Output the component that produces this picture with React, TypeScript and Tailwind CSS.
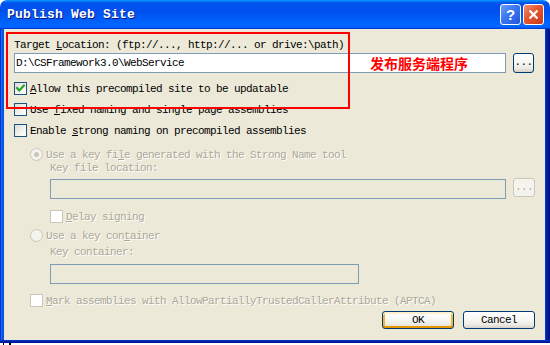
import React from "react";

const mono = "font-['Liberation_Mono',monospace] text-[11px] tracking-[-0.6px] leading-[13px] whitespace-pre";
const dis = "text-[#ACA899] [text-shadow:1px_1px_0_#ffffff]";
const xpBtn =
  "border border-[#003C74] rounded-[3px] bg-[linear-gradient(180deg,#ffffff_0%,#f7f7f4_45%,#eceae3_80%,#d6d0c5_100%)]";

function U({ children }: { children: React.ReactNode }) {
  return <span className="underline underline-offset-[1px] decoration-1">{children}</span>;
}

function Check({ checked = false, disabled = false }: { checked?: boolean; disabled?: boolean }) {
  return (
    <div
      className={
        "w-[13px] h-[13px] shrink-0 flex items-center justify-center border " +
        (disabled
          ? "border-[#CAC8BB] bg-white"
          : "border-[#1C5180] bg-[linear-gradient(135deg,#dcdcd7_0%,#f0f0ec_50%,#ffffff_100%)]")
      }
    >
      {checked && (
        <svg width="11" height="11" viewBox="0 0 11 11">
          <path d="M2 5 L4.3 7.5 L9 2.5" stroke="#21A121" strokeWidth="2" fill="none" strokeLinecap="square" />
        </svg>
      )}
    </div>
  );
}

function Radio({ checked = false }: { checked?: boolean }) {
  return (
    <div className="w-[13px] h-[13px] shrink-0 rounded-full border border-[#CAC8BB] bg-[#F4F3EE] flex items-center justify-center">
      {checked && <div className="w-[5px] h-[5px] rounded-full bg-[#CAC8BB]" />}
    </div>
  );
}

function Row({
  box,
  children,
  className = "",
}: {
  box: React.ReactNode;
  children: React.ReactNode;
  className?: string;
}) {
  return (
    <div className={"flex items-start h-[13px] gap-[3px] " + className}>
      {box}
      <div className={mono + " mt-px"}>{children}</div>
    </div>
  );
}

export default function App() {
  return (
    <div className="relative w-[550px] h-[345px] bg-white overflow-hidden">
      <div className="flex flex-col h-[343px] rounded-t-[7px] overflow-hidden">
        {/* Title bar */}
        <div className="h-[29px] shrink-0 flex items-center pl-[7px] pr-[6px] bg-[linear-gradient(180deg,#0997ff_0%,#0053ee_10%,#0050ee_40%,#0066ff_86%,#0066ff_92%,#005bff_95%,#003dd7_97%,#003dd7_100%)]">
          <div className="flex-1 pt-[1px] font-['Liberation_Mono',monospace] font-bold text-[13px] tracking-[0.2px] leading-[16px] text-white [text-shadow:1px_1px_0_#0a1883]">
            Publish Web Site
          </div>
          <div className="flex gap-[2px] items-center">
            <div className="w-[21px] h-[21px] rounded-[3px] border border-white bg-[linear-gradient(135deg,#6c9df9_0%,#3a76f0_45%,#2256de_100%)] flex items-center justify-center">
              <span className="font-['Liberation_Sans',sans-serif] font-bold text-[15px] leading-none text-white">?</span>
            </div>
            <div className="w-[21px] h-[21px] rounded-[3px] border border-white bg-[linear-gradient(135deg,#f19273_0%,#e2562f_45%,#c8391a_100%)] flex items-center justify-center">
              <svg width="13" height="13" viewBox="0 0 13 13">
                <path d="M2.5 2.5 L10.5 10.5 M10.5 2.5 L2.5 10.5" stroke="#ffffff" strokeWidth="2.2" />
              </svg>
            </div>
          </div>
        </div>

        <div className="flex flex-1">
          {/* left frame */}
          <div className="w-[4px] bg-[linear-gradient(90deg,#0831d9_0%,#0831d9_25%,#166aee_25%,#166aee_50%,#0855dd_50%,#0855dd_100%)]" />
          {/* body */}
          <div className="flex-1 bg-[#ECE9D8] flex flex-col pl-[10px] pr-[10px] text-black">
            <div className={mono + " mt-[10px] h-[13px]"}>
              Target <U>L</U>ocation: (ftp://..., http://... or drive:\path)
            </div>
            <div className="flex mt-[1px] gap-[7px] items-start">
              <div className={"w-[492px] h-[20px] border border-[#7F9DB9] bg-white pl-[1px] pt-[3px] " + mono}>
                D:\CSFramework3.0\WebService
              </div>
              <div className={xpBtn + " w-[21px] h-[20px] flex items-center justify-center " + mono}>
                <span className="mt-[-1px]">...</span>
              </div>
            </div>

            <Row className="mt-[9px]" box={<Check checked />}>
              <U>A</U>llow this precompiled site to be updatable
            </Row>
            <Row className="mt-[8px]" box={<Check />}>
              Use <U>f</U>ixed naming and single page assemblies
            </Row>
            <Row className="mt-[8px]" box={<Check />}>
              Enable <U>s</U>trong naming on precompiled assemblies
            </Row>

            <Row className={"mt-[11px] ml-[16px] " + dis} box={<Radio checked />}>
              Use a key fi<U>l</U>e generated with the Strong Name tool
            </Row>
            <div className={mono + " " + dis + " mt-[1px] ml-[36px] h-[13px]"}>Key file location:</div>
            <div className="flex mt-[4px] ml-[36px] gap-[7px] items-start">
              <div className="w-[456px] h-[20px] border border-[#7F9DB9] bg-[#ECE9D8]" />
              <div className={"w-[22px] h-[19px] mt-[-1px] rounded-[3px] border border-[#C9C7BA] bg-[#F4F3EE] flex items-center justify-center text-[#ACA899] " + mono}>
                <span className="mt-[-1px]">...</span>
              </div>
            </div>
            <Row className={"mt-[11px] ml-[36px] " + dis} box={<Check disabled />}>
              <U>D</U>elay signing
            </Row>

            <Row className={"mt-[6px] ml-[16px] " + dis} box={<Radio />}>
              Use a key con<U>t</U>ainer
            </Row>
            <div className={mono + " " + dis + " mt-[4px] ml-[36px] h-[13px]"}>Key container:</div>
            <div className="mt-[5px] ml-[36px] w-[309px] h-[20px] border border-[#7F9DB9] bg-[#ECE9D8]" />

            <Row className={"mt-[10px] ml-[16px] " + dis} box={<Check disabled />}>
              <U>M</U>ark assemblies with AllowPartiallyTrustedCallerAttribute (APTCA)
            </Row>

            <div className="flex justify-end gap-[9px] mt-[4px]">
              <div
                className={
                  xpBtn +
                  " w-[72px] h-[18px] flex items-center justify-center shadow-[inset_0_2px_0_#fff0cf,inset_0_-2px_0_#e59700,inset_2px_0_0_#f8b330,inset_-2px_0_0_#f8b330] " +
                  mono
                }
              >
                OK
              </div>
              <div className={xpBtn + " w-[72px] h-[18px] flex items-center justify-center " + mono}>Cancel</div>
            </div>
          </div>
          {/* right frame */}
          <div className="w-[5px] bg-[linear-gradient(90deg,#003bda_0%,#003bda_20%,#001ea0_20%,#001ea0_60%,#00138c_60%,#00138c_100%)]" />
        </div>
        {/* bottom frame */}
        <div className="h-[3px] shrink-0 bg-[linear-gradient(180deg,#003bda_0%,#001ea0_50%,#00138c_100%)]" />
      </div>
      {/* bottom strip */}
      <div className="flex h-[2px] gap-[5px] pl-[3px]">
        <div className="w-[1px] bg-black" />
        <div className="w-[2px] bg-black" />
      </div>

      {/* annotations */}
      <div className="absolute left-[6px] top-[32px] w-[344px] h-[77px] border-2 border-[#FF0000]" />
      <div className="absolute left-[370px] top-[55px] font-['Noto_Sans_CJK_SC',sans-serif] font-bold text-[14px] leading-[16px] text-[#FF0000]">
        发布服务端程序
      </div>
    </div>
  );
}
